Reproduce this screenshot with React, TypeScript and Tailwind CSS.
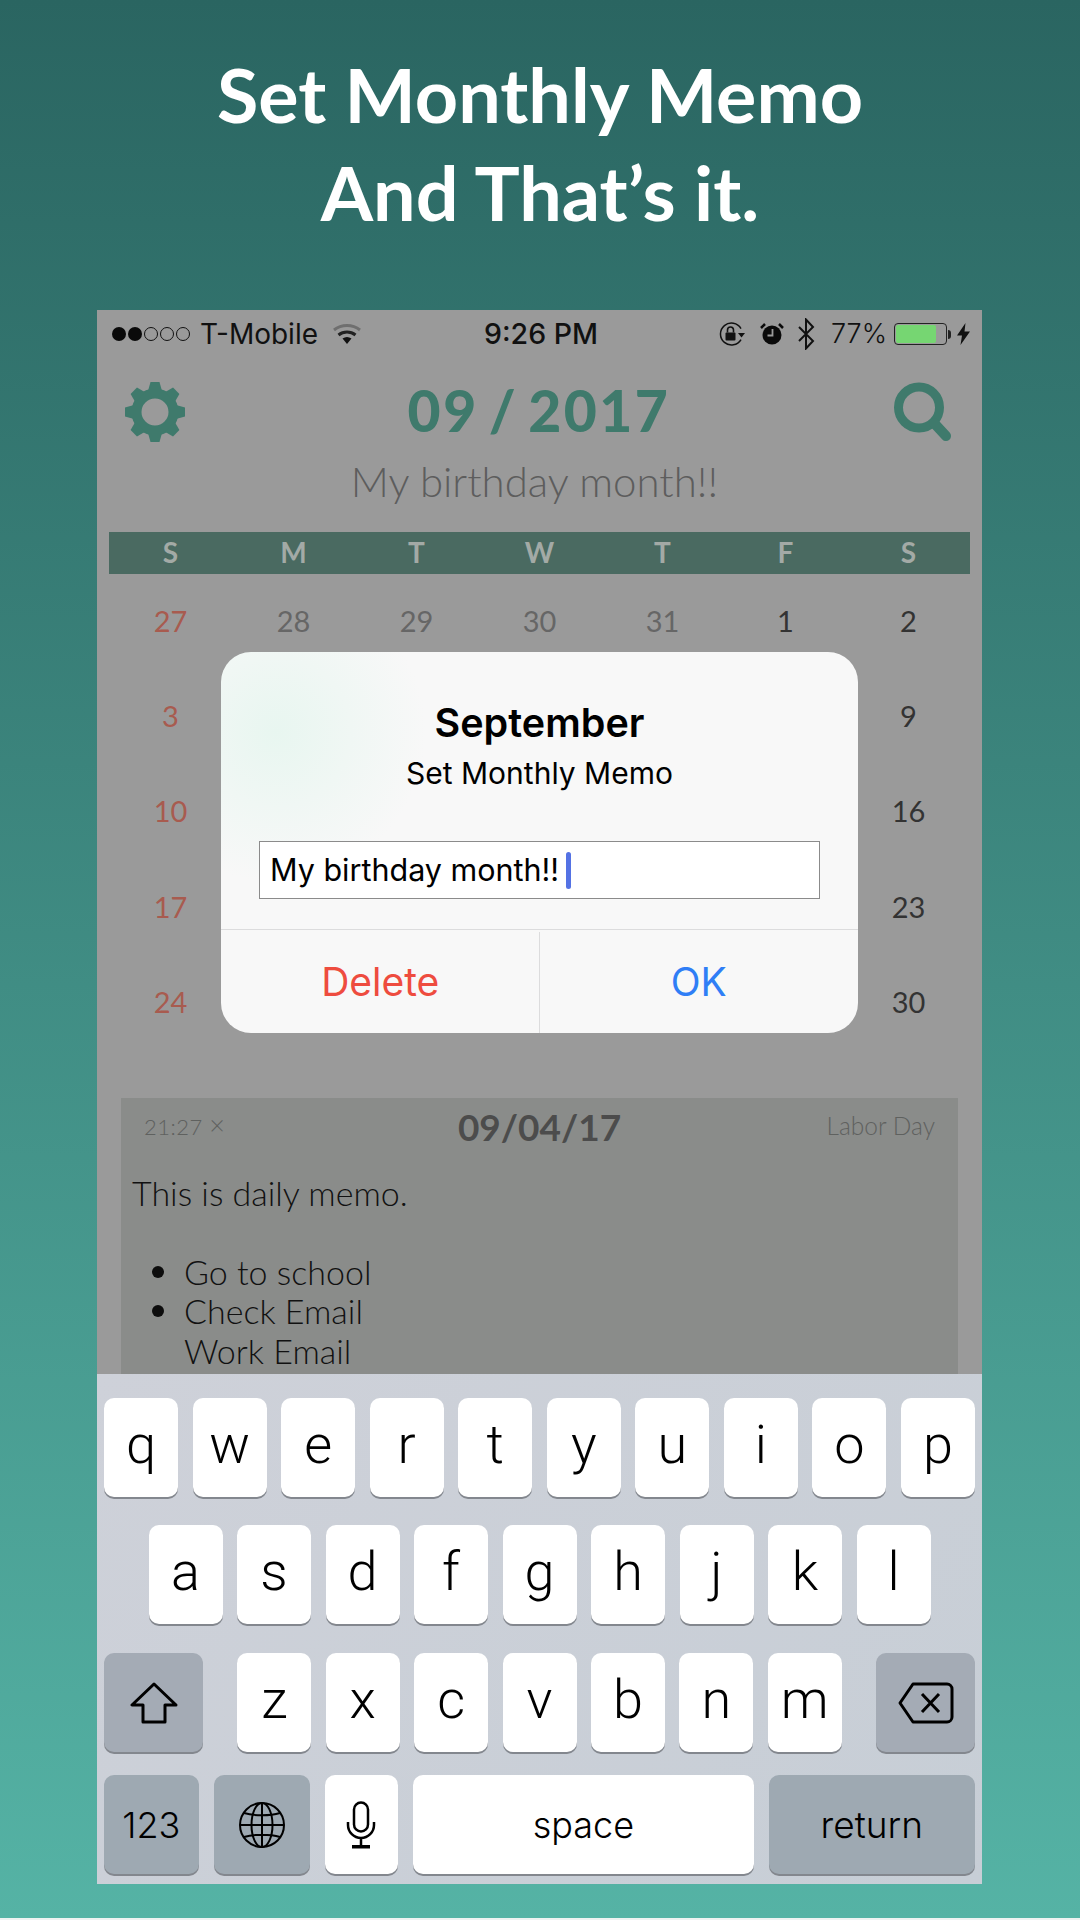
import React from "react";

const Gear = () => {
  const teeth = [0, 45, 90, 135, 180, 225, 270, 315];
  return (
    <svg width="60" height="60" viewBox="0 0 60 60" className="block">
      <circle cx="30" cy="30" r="18.500" fill="none" stroke="#3f7a6c" strokeWidth="10" />
      {teeth.map((a) => (
        <path key={a} d="M25.500 0h9l2.500 9h-14z" fill="#3f7a6c" transform={`rotate(${a} 30 30)`} />
      ))}
    </svg>
  );
};

const SearchIcon = () => (
  <svg width="60" height="60" viewBox="0 0 60 60" className="block">
    <circle cx="26" cy="25.500" r="20.500" fill="none" stroke="#3f7a6c" strokeWidth="9" />
    <path d="M41 41l12 13" fill="none" stroke="#3f7a6c" strokeWidth="10" strokeLinecap="round" />
  </svg>
);

const Wifi = () => (
  <svg width="30" height="22" viewBox="0 0 30 22" className="block">
    <path d="M2 7C9.500 1 20.500 1 28 7" fill="none" stroke="#6f6f6f" strokeWidth="3" />
    <path d="M6.500 12C11.500 8 18.500 8 23.500 12" fill="none" stroke="#222" strokeWidth="3" />
    <path d="M10.500 15.500C13.500 13.500 16.500 13.500 19.500 15.500L15 21z" fill="#111" />
  </svg>
);

const RotLock = () => (
  <svg width="30" height="24" viewBox="0 0 30 24" className="block">
    <path d="M23 17.500A11 11 0 1 1 23 6.500" fill="none" stroke="#111" strokeWidth="1.500" />
    <path d="M20 11h7l-3.500 4.500z" fill="#111" />
    <rect x="7.500" y="10.500" width="10" height="8" rx="1" fill="#111" />
    <path d="M9.500 10.500V8a3 3 0 0 1 6 0v2.500" fill="none" stroke="#111" strokeWidth="1.600" />
  </svg>
);

const Alarm = () => (
  <svg width="24" height="22" viewBox="0 0 24 22" className="block">
    <circle cx="12" cy="12" r="9.500" fill="#0a0a0a" />
    <path d="M1 5l4-4M23 5l-4-4" stroke="#0a0a0a" strokeWidth="2.500" />
    <path d="M12.500 6v6.500H7.500" fill="none" stroke="#9a9a9a" strokeWidth="1.800" />
  </svg>
);

const Bluetooth = () => (
  <svg width="18" height="32" viewBox="0 0 18 32" className="block">
    <path d="M2 9l14 14-7 7.500V1.500L16 9 2 23" fill="none" stroke="#111" strokeWidth="2" />
  </svg>
);

const Battery = () => (
  <div className="flex items-center">
    <div className="w-[53px] h-[22px] border border-[#222] rounded-[4px] p-px">
      <div className="h-full w-[40px] bg-[#76d672] rounded-[2px]" />
    </div>
    <div className="w-[3px] h-[9px] ml-[1px] bg-[#222] rounded-r-full" />
  </div>
);

const Bolt = () => (
  <svg width="13" height="22" viewBox="0 0 13 22" className="block">
    <path d="M8.500 0L0 12.500h5L3.500 22 13 8.500H7.500z" fill="#111" />
  </svg>
);

const ShiftIcon = () => (
  <svg width="48" height="42" viewBox="0 0 48 42" className="block">
    <path d="M24 2L2 23h11v17h22V23h11z" fill="none" stroke="#000" strokeWidth="3" strokeLinejoin="round" />
  </svg>
);

const BackIcon = () => (
  <svg width="56" height="42" viewBox="0 0 56 42" className="block">
    <path d="M15 2H49a5 5 0 0 1 5 5V35a5 5 0 0 1-5 5H15L2 21z" fill="none" stroke="#000" strokeWidth="3" strokeLinejoin="round" />
    <path d="M24 12l17 18M41 12L24 30" fill="none" stroke="#000" strokeWidth="3" />
  </svg>
);

const GlobeIcon = () => (
  <svg width="48" height="48" viewBox="0 0 48 48" className="block">
    <g fill="none" stroke="#000" strokeWidth="2">
      <circle cx="24" cy="24" r="22" />
      <ellipse cx="24" cy="24" rx="10.500" ry="22" />
      <path d="M24 2v44M2 24h44M6 12c10 3 26 3 36 0M6 36c10-3 26-3 36 0" />
    </g>
  </svg>
);

const MicIcon = () => (
  <svg width="30" height="48" viewBox="0 0 30 48" className="block">
    <g fill="none" stroke="#000" strokeWidth="2.500">
      <rect x="8" y="1.500" width="14" height="29" rx="7" />
      <path d="M2 21v3a13 13 0 0 0 26 0v-3M15 37v8" />
    </g>
    <rect x="6" y="44" width="18" height="3.500" fill="#000" />
  </svg>
);

const keyBase =
  "flex items-center justify-center h-[99px] rounded-[10px] shadow-[0_2px_0_#83878e] font-['Inter',sans-serif] text-black";

const LetterKey = ({ k }: { k: string }) => (
  <div className={`${keyBase} w-[74px] bg-white text-[54px] font-['Roboto',sans-serif] font-light pb-[6px]`}>{k}</div>
);

const days: [string, string][][] = [
  ["27", "28", "29", "30", "31", "1", "2"],
  ["3", "4", "5", "6", "7", "8", "9"],
  ["10", "11", "12", "13", "14", "15", "16"],
  ["17", "18", "19", "20", "21", "22", "23"],
  ["24", "25", "26", "27", "28", "29", "30"],
].map((row, r) =>
  row.map((d, c): [string, string] => {
    if (c === 0) return [d, "text-[#a85b4f]"];
    if (r === 0 && c < 5) return [d, "text-[#666666]"];
    return [d, "text-[#333333]"];
  })
);

export default function App() {
  return (
    <div className="w-[1080px] h-[1920px] flex flex-col bg-[linear-gradient(to_bottom,#2a6561,#55b3a5)] border-b-2 border-[#eef3f2] overflow-hidden">
      <div className="h-[310px] pt-[45px] text-center text-white font-['Lato',sans-serif] font-bold text-[75.500px] leading-[98px]">
        <div>Set Monthly Memo</div>
        <div>And That’s it.</div>
      </div>

      <div className="relative ml-[97px] w-[885px] h-[1574px] flex flex-col bg-[#9a9a9a] overflow-hidden">
        {/* status bar */}
        <div className="h-[46px] pt-[2px] grid grid-cols-[1fr_auto_1fr] items-center pl-[15px] pr-[12px] font-['Inter',sans-serif] text-[27px] text-[#111]">
          <div className="flex items-center">
            <div className="flex gap-[2px]">
              <span className="w-[14px] h-[14px] rounded-full bg-[#0a0a0a]" />
              <span className="w-[14px] h-[14px] rounded-full bg-[#0a0a0a]" />
              <span className="w-[14px] h-[14px] rounded-full border border-[#111]" />
              <span className="w-[14px] h-[14px] rounded-full border border-[#111]" />
              <span className="w-[14px] h-[14px] rounded-full border border-[#111]" />
            </div>
            <span className="ml-[10px] text-[28px]">T-Mobile</span>
            <span className="ml-[14px]"><Wifi /></span>
          </div>
          <div className="font-medium text-[28.500px]">9:26 PM</div>
          <div className="flex items-center justify-end">
            <RotLock />
            <span className="ml-[12px]"><Alarm /></span>
            <span className="ml-[13px]"><Bluetooth /></span>
            <span className="ml-[16px] font-light">77%</span>
            <span className="ml-[7px]"><Battery /></span>
            <span className="ml-[6px]"><Bolt /></span>
          </div>
        </div>

        {/* header */}
        <div className="mt-[26px] pl-[28px] pr-[29px] flex items-center justify-between">
          <Gear />
          <div className="pb-[4px] font-['Lato',sans-serif] font-black text-[57px] leading-[56px] tracking-[2.500px] [word-spacing:-6px] text-[#3f7a6c]">09 / 2017</div>
          <SearchIcon />
        </div>
        <div className="mt-[16px] h-[46px] pr-[10px] text-center font-['Lato',sans-serif] font-light text-[42px] leading-[46px] text-[#5d5d5d]">
          My birthday month!!
        </div>

        {/* calendar */}
        <div className="mt-[28px] mx-[12px]">
          <div className="h-[42px] grid grid-cols-7 bg-[#4a6a61] font-['Lato',sans-serif] text-[28px] font-bold text-[#a3aaa6] text-center leading-[40px]">
            {["S", "M", "T", "W", "T", "F", "S"].map((d, i) => (
              <div key={i}>{d}</div>
            ))}
          </div>
          {days.map((row, r) => (
            <div key={r} className="h-[95.300px] pb-[2px] grid grid-cols-7 items-center text-center font-['Lato',sans-serif] text-[29px]">
              {row.map(([d, c], i) => (
                <div key={i} className={c}>{d}</div>
              ))}
            </div>
          ))}
        </div>

        {/* memo */}
        <div className="mt-[48px] mx-[24px] flex-1 min-h-0 overflow-hidden bg-[#8a8c8a] font-['Lato',sans-serif]">
          <div className="h-[56px] grid grid-cols-[1fr_auto_1fr] items-center px-[23px]">
            <div className="text-[22px] font-light text-[#5f615f] tracking-[0.500px]">21:27 <span className="text-[27px] leading-[20px]">×</span></div>
            <div className="text-[37px] font-bold text-[#4c4c4c]">09/04/17</div>
            <div className="text-right text-[24.500px] font-light text-[#5f615f]">Labor Day</div>
          </div>
          <div className="pl-[11px] mt-[19px] text-[34px] leading-[39.500px] font-light text-[#111]">
            <div>This is daily memo.</div>
            <div className="h-[39px]" />
            <div className="flex items-center pl-[20px]">
              <span className="w-[12px] h-[12px] rounded-full bg-[#0d0d0d]" />
              <span className="ml-[20px]">Go to school</span>
            </div>
            <div className="flex items-center pl-[20px]">
              <span className="w-[12px] h-[12px] rounded-full bg-[#0d0d0d]" />
              <span className="ml-[20px]">Check Email</span>
            </div>
            <div className="pl-[52px]">Work Email</div>
          </div>
        </div>

        {/* keyboard */}
        <div className="h-[510px] shrink-0 pt-[24px] px-[7px] flex flex-col bg-[linear-gradient(135deg,#ced1d9,#c7ced6)]">
          <div className="flex justify-between">
            {"qwertyuiop".split("").map((k) => (
              <LetterKey key={k} k={k} />
            ))}
          </div>
          <div className="mt-[28px] flex justify-center gap-[14.500px]">
            {"asdfghjkl".split("").map((k) => (
              <LetterKey key={k} k={k} />
            ))}
          </div>
          <div className="mt-[29px] flex justify-between">
            <div className={`${keyBase} w-[99px] bg-[#a4abb5]`}><ShiftIcon /></div>
            <div className="flex gap-[14.400px]">
              {"zxcvbnm".split("").map((k) => (
                <LetterKey key={k} k={k} />
              ))}
            </div>
            <div className={`${keyBase} w-[99px] bg-[#a4abb5]`}><BackIcon /></div>
          </div>
          <div className="mt-[23px] flex gap-[15px]">
            <div className={`${keyBase} w-[95px] bg-[#9ea9b2] text-[36px] font-light`}>123</div>
            <div className={`${keyBase} w-[96px] bg-[#9ea9b2]`}><GlobeIcon /></div>
            <div className={`${keyBase} w-[74px] bg-white`}><MicIcon /></div>
            <div className={`${keyBase} w-[341px] bg-white text-[36px] font-light`}>space</div>
            <div className={`${keyBase} w-[207px] bg-[#9ea9b2] text-[37px] font-light`}>return</div>
          </div>
        </div>

        {/* dialog */}
        <div className="absolute left-[124px] top-[342px] w-[637px] h-[381px] flex flex-col rounded-[30px] overflow-hidden bg-[radial-gradient(circle_at_55px_80px,#e8f6f0,#f8f8f8_150px)] font-['Inter',sans-serif] text-black">
          <div className="flex-1 px-[38px] flex flex-col">
            <div className="mt-[47px] text-center text-[39.500px] leading-[48px] font-semibold">September</div>
            <div className="mt-[4px] text-center text-[30px] leading-[44px]">Set Monthly Memo</div>
            <div className="mt-[46px] h-[58px] bg-white border border-[#8b8b8b] flex items-center pl-[10px] text-[30.500px]">
              <span>My birthday month!!</span>
              <span className="ml-[7px] w-[5px] h-[37px] rounded-full bg-[#5472e4]" />
            </div>
          </div>
          <div className="h-[104px] pt-[2px] grid grid-cols-2 border-t border-[#dcdcdd] text-[39px]">
            <div className="flex items-center justify-center pl-[1px] text-[#ee4c3f] border-r border-[#dcdcdd]">Delete</div>
            <div className="flex items-center justify-center text-[#2f7ef6]">OK</div>
          </div>
        </div>
      </div>
    </div>
  );
}
